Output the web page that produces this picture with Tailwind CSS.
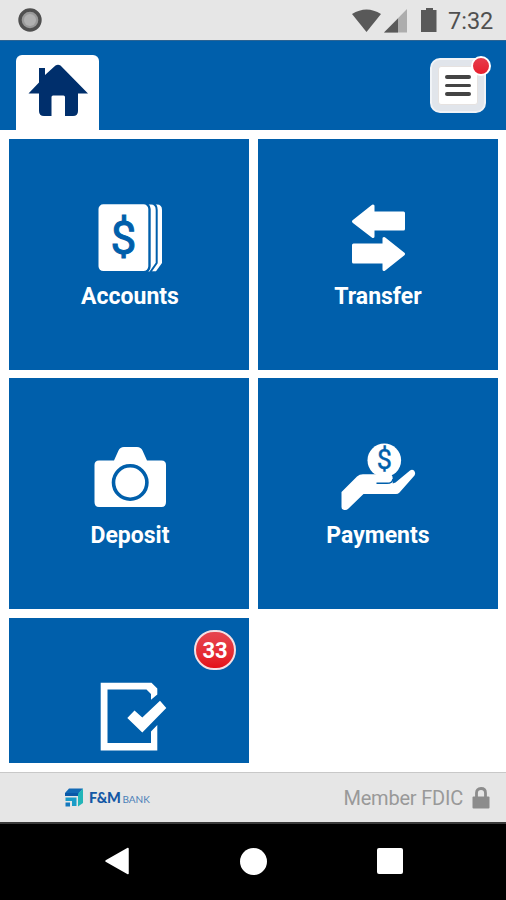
<!DOCTYPE html>
<html lang="en">
<head>
  <meta charset="UTF-8">
  <meta name="viewport" content="width=device-width, initial-scale=1.0">
  <title>F&amp;M Bank</title>
  <script src="https://cdn.jsdelivr.net/npm/@tailwindcss/browser@4"></script>
</head>
<body class="flex flex-col w-[506px] h-[900px] overflow-hidden bg-white font-[Roboto,sans-serif]">
  <!-- Status bar -->
  <div class="flex items-center h-10 shrink-0 bg-[#e6e6e6] pl-[18px] pr-3">
    <svg class="w-6 h-6" viewBox="0 0 24 24">
      <circle cx="12" cy="12" r="10" fill="#999" stroke="#505050" stroke-width="3.4" />
      <circle cx="12" cy="12" r="6" fill="#b0b0b0" />
    </svg>
    <svg class="ml-auto w-[90px] h-7" viewBox="0 0 90 28">
      <path d="M2 8Q16.500-1 31 8L16.500 26Z" fill="#595959" />
      <path d="M57 3V26.500H34Z" fill="#adadad" />
      <path d="M48 12.500V26.500H34Z" fill="#595959" />
      <path d="M76 2h7v2h3.500v22H71V4h5z" fill="#595959" />
    </svg>
    <span class="ml-[8px] w-[46px] text-[23.500px] leading-none text-[#505050] whitespace-nowrap mt-1">7:32</span>
  </div>

  <!-- Header -->
  <header class="flex justify-between h-[90px] shrink-0 bg-[#005fab] border-t border-[#2c6494] pl-4 pr-5">
    <div class="mt-[14px] w-[83px] bg-white rounded-t-md pl-3 pt-[9px]">
      <svg class="w-[61px] h-[53px]" viewBox="0 0 61 53">
        <path d="M27.500 1.500Q30 0 32.500 1.500L60 29.500H50V47Q50 52 45 52H37V33Q37 31.500 35.500 31.500H25Q23.500 31.500 23.500 33V52H16Q11 52 11 47V29.500H.5L11 18.500V4H17V11Z" fill="#002f6c" />
      </svg>
    </div>
    <div class="relative mt-[17px] w-[56px] h-[55px] rounded-[10px] bg-[#e1e5eb] border-2 border-[#f0f3f7] p-[6px]">
      <div class="flex flex-col justify-center items-center gap-[5px] h-full bg-white rounded-[3px] border border-[#e6e2e0]">
        <div class="w-[26px] h-[3.500px] rounded-full bg-[#444]"></div>
        <div class="w-[26px] h-[3.500px] rounded-full bg-[#444]"></div>
        <div class="w-[26px] h-[3.500px] rounded-full bg-[#444]"></div>
      </div>
      <div class="absolute -top-[4px] -right-[7px] w-5 h-5 rounded-full border-2 border-white bg-linear-to-b from-[#e63b4b] to-[#e81c2c]"></div>
    </div>
  </header>

  <!-- Menu tiles -->
  <main class="grid grid-cols-[240px_240px] grid-rows-[231px_231px_146px] gap-x-[9px] gap-y-2 h-[642px] shrink-0 pl-[9px] pt-[9px] text-white text-[23px] leading-6 font-bold">
    <div class="flex flex-col items-center pt-16 bg-[#005fab]">
      <svg class="w-20 h-[72px]" viewBox="0 0 80 72">
        <path d="M60 1.500H68Q73 1.500 73 7V60L67 68.300H60Z" fill="#fff" />
        <path d="M54 .5H62Q67.700 .5 67.700 7V60L61 69.500H54Z" fill="#fff" stroke="#005fab" stroke-width="2" />
        <rect x="8.300" y=".1" width="52.200" height="69.200" rx="6" fill="#fff" stroke="#005fab" stroke-width="2.400" />
        <text x="34.500" y="51" font-size="46" font-weight="400" text-anchor="middle" fill="#005fab" stroke="#005fab" stroke-width="1">$</text>
      </svg>
      <p class="mt-[10px] pl-0.5">Accounts</p>
    </div>

    <div class="flex flex-col items-center pt-16 bg-[#005fab]">
      <svg class="w-20 h-[72px]" viewBox="0 0 80 72" fill="#fff" stroke="#fff" stroke-width="3" stroke-linejoin="round">
        <path d="M15.500 18.500L35 3V10H65.500V26H35V33.500Z" />
        <path d="M65.500 51L46 35.500V42H15.500V59H46V66.500Z" />
      </svg>
      <p class="mt-[10px]">Transfer</p>
    </div>

    <div class="flex flex-col items-center pt-16 bg-[#005fab]">
      <svg class="w-20 h-[72px]" viewBox="0 0 80 72">
        <path d="M10 18.500H25L29.500 8.500Q31 5 35 5H48Q52 5 53.500 8.500L58 18.500H72.500Q77 18.500 77 23V60Q77 65 72.500 65H10Q5.500 65 5.500 60V23Q5.500 18.500 10 18.500Z" fill="#fff" />
        <circle cx="41.200" cy="40.500" r="16.700" fill="none" stroke="#005fab" stroke-width="3.600" />
      </svg>
      <p class="mt-[10px] pl-0.5">Deposit</p>
    </div>

    <div class="flex flex-col items-center pt-16 bg-[#005fab]">
      <svg class="w-20 h-[72px]" viewBox="0 0 80 72">
        <circle cx="46.300" cy="18.300" r="16.800" fill="#fff" />
        <text x="46.300" y="27" font-size="27" font-weight="400" text-anchor="middle" fill="#005fab" stroke="#005fab" stroke-width=".4">$</text>
        <path d="M3.500 50L19 34.500Q21.500 32.300 25 32.300H51Q54.700 32.300 54.700 36.500V41.500L57.500 40.500 72 28.500Q74 27 76 28.500 78 31 76.500 33.500L61.500 50.500Q60 52 58 52H25.500L10.500 66.500Q8 69 5 67.500 3.500 67 3.500 65Z" fill="#fff" />
        <path d="M38.500 41.300H49Q54.500 41.300 55 37" fill="none" stroke="#005fab" stroke-width="1.500" />
      </svg>
      <p class="mt-[10px]">Payments</p>
    </div>

    <div class="relative flex flex-col items-center mt-px pt-16 bg-[#005fab]">
      <svg class="w-20 h-[72px]" viewBox="0 0 80 72">
        <path d="M11.700 .7H62.500L68.300 6.500V12.500L62 17.700V12L57.500 7.500H18.500V61H62V49.500L68.300 43V68.500H11.700Z" fill="#fff" />
        <path d="M38.300 36L45.500 28.500 53.300 35.500 71 18.800 77.300 26 53.300 50.500Z" fill="#fff" />
      </svg>
      <div class="absolute top-3 right-[13px] flex items-center justify-center w-[42px] h-10 rounded-full border-2 border-[#f5dfe4] bg-linear-to-b from-[#e64450] to-[#e40d17] pt-0.5 text-[22px]">33</div>
    </div>
  </main>

  <!-- Footer -->
  <footer class="flex items-center h-[50px] shrink-0 bg-[#e6e6e6] border-t border-[#c8c8c8] pl-[65px] pr-4">
    <svg class="w-[18px] h-[19px]" viewBox="0 0 18 19">
      <path d="M0 5L4 .5H18L14 5Z" fill="#1269b5" />
      <path d="M0 5H14V8H0Z" fill="#0a58a8" />
      <path d="M13 5.500L18 .5V15L13 18.500Z" fill="#22b5b8" />
      <path d="M.5 9.500H11.500V18H7V13H.5Z" fill="#1a9cc8" />
      <path d="M.5 14.500H5V18.500H.5Z" fill="#1478be" />
    </svg>
    <div class="flex items-baseline ml-[6px] font-[Lato,sans-serif] text-[#1458a5]">
      <span class="text-[14.500px] font-black tracking-[-0.4px]">F&amp;M</span>
      <span class="ml-[2px] text-[10px] text-[#4a7fb8]">BANK</span>
    </div>
    <span class="ml-auto text-[20px] tracking-[-0.2px] text-[#999]">Member FDIC</span>
    <svg class="ml-[9px] w-[18px] h-6" viewBox="0 0 18 24">
      <path d="M4.500 11V7Q4.500 2.500 9 2.500T13.500 7V11" fill="none" stroke="#8c8c8c" stroke-width="2.800" />
      <rect x=".5" y="10.500" width="17" height="12" rx="1" fill="#8c8c8c" />
    </svg>
  </footer>

  <!-- Navigation bar -->
  <nav class="flex items-center h-[78px] shrink-0 bg-black border-t-2 border-[#3a3a3a] pb-0.5 pl-[104px]">
    <svg class="w-7 h-7" viewBox="0 0 28 28">
      <path d="M2 14L24 1.500V26.500Z" fill="#fff" stroke="#fff" stroke-width="1.500" stroke-linejoin="round" />
    </svg>
    <div class="ml-[108px] w-[27px] h-[27px] rounded-full bg-white"></div>
    <div class="ml-[110px] w-[26px] h-[26px] rounded-xs bg-white"></div>
  </nav>
</body>
</html>
